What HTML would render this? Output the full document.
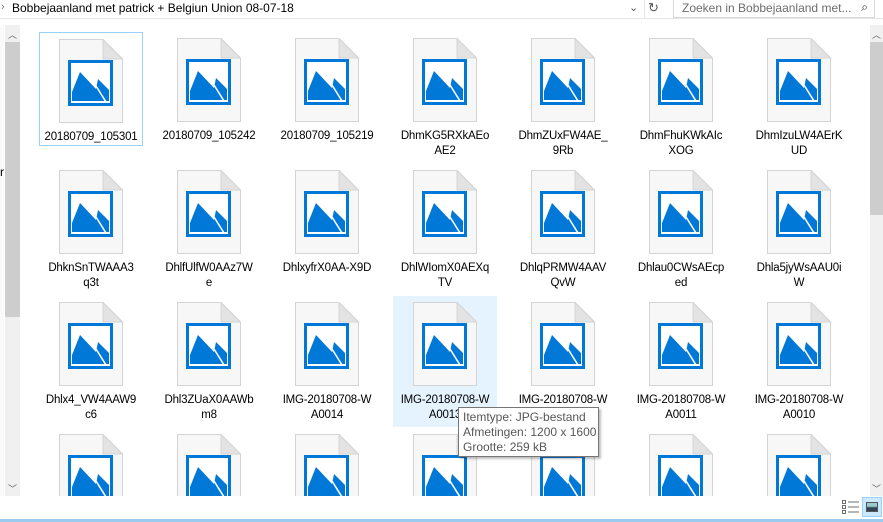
<!DOCTYPE html>
<html><head><meta charset="utf-8"><style>
*{margin:0;padding:0;box-sizing:border-box}
html,body{width:883px;height:522px;overflow:hidden}
body{background:#fff;font-family:"Segoe UI","Liberation Sans",sans-serif;position:relative}
.top{position:absolute;left:0;top:0;width:883px;height:19px;border-bottom:1px solid #e5e5e5}
.addr{position:absolute;left:12px;top:1px;font-size:12px;color:#000}
.search{position:absolute;left:673px;top:-1px;width:202px;height:19px;border:1px solid #d9d9d9;font-size:12px;color:#6d6d6d;padding:1px 0 0 8px}
.lsb{position:absolute;left:5px;top:25px;width:15px;height:471px;background:#f0f0f0}
.rsb{position:absolute;left:870px;top:25px;width:13px;height:471px;background:#f0f0f0}
.thumb{position:absolute;left:0;width:100%;background:#cdcdcd}
.arr{position:absolute;left:0;width:100%;text-align:center;font-size:9px;color:#606060;line-height:10px}
.area{position:absolute;left:22px;top:20px;width:848px;height:476px;overflow:hidden}
.it{position:absolute;width:104px;text-align:center;font-size:11.5px;line-height:15px;color:#000;letter-spacing:-0.2px}
.it svg{display:block;margin:0 auto}
.sel{background:#e5f3ff}
.foc{border:1px solid #99d1ff}
.tip{position:absolute;left:458px;top:407px;width:141px;height:50px;background:#fff;border:1px solid #767676;box-shadow:2px 2px 2px rgba(0,0,0,.25);font-size:12px;line-height:15px;color:#575757;padding:2px 0 0 4px}
</style></head><body>
<svg width="0" height="0" style="position:absolute"><defs><g id="ic">
<path d="M0.5,0.5H44L63.5,20V83.5H0.5Z" fill="#f7f7f7" stroke="#d4d4d4"/>
<path d="M44,0.5V20H63.5Z" fill="#e3e3e3" stroke="#d4d4d4"/>
<rect x="9" y="21" width="45" height="46" fill="#0078d7"/>
<rect x="12" y="24" width="39" height="40" fill="#fff"/>
<rect x="13" y="25" width="37" height="37" fill="#fff"/>
<polygon points="13,53 21,33 37,50 39,40 50,51 50,62 13,62" fill="#0078d7"/>
<path d="M37,47L47,63" stroke="#fff" stroke-width="1.6"/>
</g></defs></svg>
<div class="top"><span style="position:absolute;left:1px;top:1px;font-size:11px;color:#777">›</span><div class="addr">Bobbejaanland met patrick + Belgiun Union 08-07-18</div>
<span style="position:absolute;left:629px;top:1px;font-size:11px;color:#555">⌄</span><span style="position:absolute;left:644px;top:0;width:1px;height:18px;background:#e5e5e5"></span><span style="position:absolute;left:648px;top:0;font-size:13px;color:#555">↻</span>
<div class="search">Zoeken in Bobbejaanland met... <span style="position:absolute;right:6px;top:0;color:#333">⌕</span></div></div>
<div style="position:absolute;left:0;top:25px;width:4px;height:471px;background:#fafafa"></div>
<span style="position:absolute;left:0;top:165px;font-size:12px">r</span>
<div class="lsb"><div class="arr" style="top:5px">︿</div><div class="thumb" style="top:17px;height:275px"></div><div class="arr" style="top:459px">﹀</div></div>
<div class="rsb"><div class="arr" style="top:5px">︿</div><div class="thumb" style="top:17px;height:173px"></div><div class="arr" style="top:459px">﹀</div></div>
<div class="area" id="a"></div>
<div class="tip">Itemtype: JPG-bestand<br>Afmetingen: 1200 x 1600<br>Grootte: 259 kB</div>
<div style="position:absolute;left:842px;top:500px;width:18px;height:14px">
<svg width="18" height="14"><g fill="none" stroke="#6d6d6d"><rect x="0.5" y="0.5" width="3" height="3"/><rect x="0.5" y="5.5" width="3" height="3"/><rect x="0.5" y="10.5" width="3" height="3"/></g><g stroke="#6d6d6d"><path d="M6,2H17M6,7H17M6,12H17"/></g></svg></div>
<div style="position:absolute;left:862px;top:497px;width:20px;height:20px;background:#cce8ff;border:1px solid #99d1ff"><div style="position:absolute;left:3px;top:4px;width:12px;height:10px;background:linear-gradient(#9cc 0,#9cc 40%,#345 60%);border:1px solid #555"></div></div>
<div style="position:absolute;left:0;top:519px;width:883px;height:3px;background:#9ccbf0"></div>
<script>
var L=[["20180709_105301","20180709_105242","20180709_105219","DhmKG5RXkAEo<br>AE2","DhmZUxFW4AE_<br>9Rb","DhmFhuKWkAIc<br>XOG","DhmIzuLW4AErK<br>UD"],
["DhknSnTWAAA3<br>q3t","DhlfUlfW0AAz7W<br>e","DhlxyfrX0AA-X9D","DhlWIomX0AEXq<br>TV","DhlqPRMW4AAV<br>QvW","Dhlau0CWsAEcp<br>ed","Dhla5jyWsAAU0i<br>W"],
["Dhlx4_VW4AAW9<br>c6","Dhl3ZUaX0AAWb<br>m8","IMG-20180708-W<br>A0014","IMG-20180708-W<br>A0013","IMG-20180708-W<br>A0012","IMG-20180708-W<br>A0011","IMG-20180708-W<br>A0010"],
["","","","","","",""]];
var h="";
for(var r=0;r<4;r++)for(var c=0;c<7;c++){
var x=17+c*118,y=12+r*132;var cls="it";
if(r==0&&c==0)cls+=" foc";if(r==2&&c==3)cls+=" sel";
var ht=(r==0&&c==0)?114:(r==3?100:131);
h+='<div class="'+cls+'" style="left:'+x+'px;top:'+y+'px;height:'+ht+'px;padding-top:6px;'+(r==3?'overflow:hidden':'')+'"><svg width="64" height="84" viewBox="0 0 64 84"><use href="#ic"/></svg><div style="margin-top:7px">'+L[r][c]+'</div></div>';}
document.getElementById("a").innerHTML=h;
</script>
</body></html>
